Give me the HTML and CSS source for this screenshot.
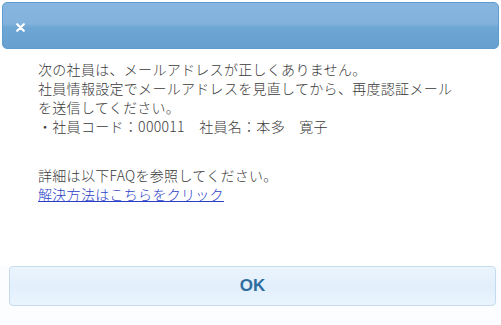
FILE: index.html
```html
<!DOCTYPE html>
<html lang="ja">
<head>
<meta charset="utf-8">
<link rel="stylesheet" href="styles.css">
</head>
<body>
<div class="dialog">
  <div class="titlebar">
    <span class="close" aria-label="close">
      <svg width="9" height="9" viewBox="0 0 9 9"><path d="M1.2 1.2 L7.8 7.8 M7.8 1.2 L1.2 7.8" stroke="#fff" stroke-width="2.2" stroke-linecap="round"/></svg>
    </span>
  </div>
  <div class="content">
    <p>次の社員は、メールアドレスが正しくありません。<br>社員情報設定でメールアドレスを見直してから、再度認証メールを送信してください。<br>・社員コード：000011　社員名：本多　寛子</p>
    <p class="faq">詳細は以下FAQを参照してください。<br><a href="#">解決方法はこちらをクリック</a></p>
  </div>
  <div class="buttonpane">
    <button class="ok">OK</button>
  </div>
</div>
</body>
</html>
```
FILE: styles.css
```css
html, body {
  margin: 0;
  padding: 0;
  background: #fff;
}
body {
  width: 501px;
  height: 325px;
  overflow: hidden;
  font-family: "Noto Sans CJK JP", "Noto Sans", sans-serif;
}
.dialog {
  display: flex;
  flex-direction: column;
  height: 325px;
}
.titlebar {
  margin: 2px 2px 0 2px;
  height: 47px;
  border-radius: 5px;
  border: 1px solid #5d9ccd;
  box-sizing: border-box;
  background: linear-gradient(to bottom, #86b6df 0%, #83b3dc 45%, #6da5d3 55%, #68a1d1 100%);
  display: flex;
  align-items: center;
  padding-left: 13px;
  padding-top: 4px;
}
.close {
  display: flex;
  width: 9px;
  height: 9px;
}
.content {
  padding: 11px 20px 0 38px;
  color: #3a3a3a;
  font-size: 14px;
  font-weight: 300;
  line-height: 19px;
  letter-spacing: 0.3px;
  flex: 1;
}
.content p {
  margin: 0;
  width: 418px;
}
.content .faq {
  margin-top: 30px;
}
.content a {
  color: #2b3ec8;
  text-decoration: underline;
}
.buttonpane {
  padding: 0 5px 19px 9px;
  background: #fcfdfe;
}
.ok {
  display: block;
  width: 100%;
  height: 40px;
  border: 1px solid #c5dbec;
  border-radius: 4px;
  background: linear-gradient(to bottom, #eaf4fd 0%, #e2effb 50%, #e9f4fe 100%);
  color: #2e6e9e;
  font-family: "Liberation Sans", Arial, sans-serif;
  font-weight: bold;
  font-size: 17px;
  cursor: pointer;
  padding: 0;
}
```
